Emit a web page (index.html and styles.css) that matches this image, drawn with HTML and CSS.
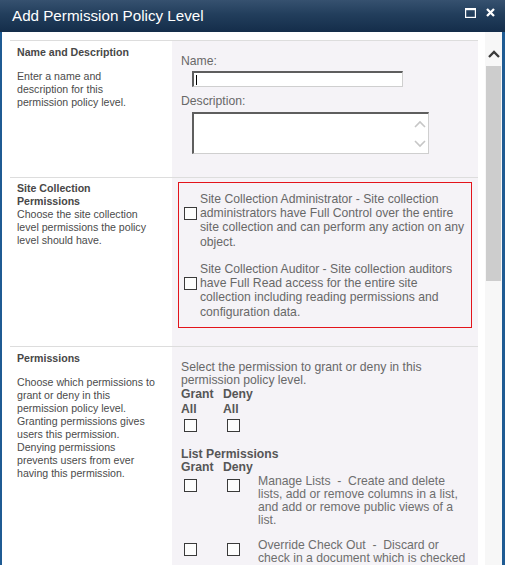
FILE: index.html
```html
<!DOCTYPE html>
<html lang="en">
<head>
<meta charset="utf-8">
<title>Add Permission Policy Level</title>
<link rel="stylesheet" href="styles.css">
</head>
<body>
<div class="dialog">
  <div class="titlebar">
    <span class="title">Add Permission Policy Level</span>
    <div class="tb-icons">
      <svg class="ic-max" width="11" height="10" viewBox="0 0 11 10"><rect x="0" y="0" width="11" height="2.2" fill="#fff"/><rect x="0.6" y="0.6" width="9.8" height="8.8" fill="none" stroke="#fff" stroke-width="1.2"/></svg>
      <svg class="ic-close" width="9" height="9" viewBox="0 0 9 9"><path d="M1 1 L8 8 M8 1 L1 8" stroke="#fff" stroke-width="2.3" fill="none"/></svg>
    </div>
  </div>
  <div class="frame">
    <div class="content">
      <div class="form">
        <section class="sec">
          <div class="lcol">
            <div class="lhead">Name and Description</div>
            <div class="ldesc gap">Enter a name and<br>description for this<br>permission policy level.</div>
          </div>
          <div class="rcol r1">
            <div class="label">Name:</div>
            <div class="textbox"><span class="caret"></span></div>
            <div class="label desc-label">Description:</div>
            <div class="textarea">
              <div class="ta-arrows">
                <svg width="12" height="8" viewBox="0 0 12 8"><path d="M1 7 L6 2 L11 7" stroke="#c6c6c6" stroke-width="1.6" fill="none"/></svg>
                <svg width="12" height="8" viewBox="0 0 12 8"><path d="M1 1 L6 6 L11 1" stroke="#c6c6c6" stroke-width="1.6" fill="none"/></svg>
              </div>
            </div>
          </div>
        </section>
        <section class="sec">
          <div class="lcol">
            <div class="lhead">Site Collection<br>Permissions</div>
            <div class="ldesc">Choose the site collection<br>level permissions the policy<br>level should have.</div>
          </div>
          <div class="rcol r2">
            <div class="redbox">
              <div class="sc-item">
                <input type="checkbox" class="cb sc-cb">
                <div class="sc-text">Site Collection Administrator - Site collection<br>administrators have Full Control over the entire<br>site collection and can perform any action on any<br>object.</div>
              </div>
              <div class="sc-item second">
                <input type="checkbox" class="cb sc-cb">
                <div class="sc-text">Site Collection Auditor - Site collection auditors<br>have Full Read access for the entire site<br>collection including reading permissions and<br>configuration data.</div>
              </div>
            </div>
          </div>
        </section>
        <section class="sec">
          <div class="lcol">
            <div class="lhead">Permissions</div>
            <div class="ldesc gap">Choose which permissions to<br>grant or deny in this<br>permission policy level.<br>Granting permissions gives<br>users this permission.<br>Denying permissions<br>prevents users from ever<br>having this permission.</div>
          </div>
          <div class="rcol r3">
            <div class="intro">Select the permission to grant or deny in this<br>permission policy level.</div>
            <div class="all-row">
              <div class="col-g"><div class="bold all-lbl">Grant<br>All</div><input type="checkbox" class="cb all-cb"></div>
              <div class="col-d"><div class="bold all-lbl">Deny<br>All</div><input type="checkbox" class="cb all-cb"></div>
            </div>
            <div class="bold lp-head">List Permissions</div>
            <div class="gd-head"><span class="col-g bold">Grant</span><span class="col-d bold">Deny</span></div>
            <div class="perm">
              <div class="col-g"><input type="checkbox" class="cb p-cb"></div>
              <div class="col-d"><input type="checkbox" class="cb p-cb"></div>
              <div class="p-text">Manage Lists&nbsp; -&nbsp; Create and delete<br>lists, add or remove columns in a list,<br>and add or remove public views of a<br>list.</div>
            </div>
            <div class="perm second">
              <div class="col-g"><input type="checkbox" class="cb p-cb"></div>
              <div class="col-d"><input type="checkbox" class="cb p-cb"></div>
              <div class="p-text">Override Check Out&nbsp; -&nbsp; Discard or<br>check in a document which is checked</div>
            </div>
          </div>
        </section>
      </div>
    </div>
    <div class="scrollbar">
      <svg class="sb-up" width="12" height="8" viewBox="0 0 12 8"><path d="M1 7 L6 2 L11 7" stroke="#3a3a3a" stroke-width="2.3" fill="none"/></svg>
      <div class="thumb"></div>
    </div>
  </div>
</div>
</body>
</html>
```
FILE: styles.css
```css
html, body {
  margin: 0;
  padding: 0;
  overflow: hidden;
  background: #fff;
}

.dialog {
  width: 505px;
  height: 565px;
  overflow: hidden;
  font-family: "Liberation Sans", Arial, sans-serif;
}

.titlebar {
  height: 32px;
  display: flex;
  align-items: flex-start;
  padding-left: 12px;
  padding-right: 10px;
  background: linear-gradient(to bottom, #36516f 0%, #223e5c 45%, #142d4a 100%);
  box-sizing: border-box;
}

.title {
  color: #fff;
  font-size: 15.2px;
  line-height: 32px;
  white-space: nowrap;
}

.tb-icons {
  margin-left: auto;
  display: flex;
  align-items: flex-start;
  gap: 10px;
  padding-top: 8px;
}

.frame {
  height: 533px;
  display: flex;
  border-left: 2px solid #1f5b93;
  border-right: 3px solid #1f5b93;
  box-sizing: border-box;
}

.content {
  flex: 1;
  padding: 8px 7px 0 8px;
  overflow: hidden;
  background: #fff;
}

.form {
  width: 468px;
}

.sec {
  display: grid;
  grid-template-columns: 162px 306px;
  border-top: 1px solid #dddddd;
}

.lcol {
  padding: 4.5px 6px 10px 7px;
  font-size: 10.6px;
  line-height: 12.9px;
  color: #4b4b4b;
  white-space: nowrap;
}

.lhead {
  font-weight: bold;
  color: #474747;
  line-height: 13px;
}

.ldesc.gap {
  margin-top: 11.5px;
}

.rcol {
  background: #f5f3f7;
  font-size: 12.2px;
  color: #686868;
  white-space: nowrap;
}

.r1 {
  padding: 13.5px 9px 23px 9px;
}

.label {
  line-height: 13.3px;
}

.desc-label {
  margin-top: 8.5px;
}

.textbox {
  margin: 3px 0 0 11px;
  width: 211px;
  height: 16px;
  box-sizing: border-box;
  background: #fff;
  border-top: 2px solid #5e5e5e;
  border-left: 2px solid #5e5e5e;
  border-right: 1px solid #cfcfcf;
  border-bottom: 1px solid #cfcfcf;
  display: flex;
  align-items: flex-start;
}

.caret {
  display: block;
  width: 1px;
  height: 10px;
  margin: 2px 0 0 2px;
  background: #000;
}

.textarea {
  margin: 3px 0 0 11px;
  width: 237px;
  height: 42px;
  box-sizing: border-box;
  background: #fff;
  border-top: 2px solid #5e5e5e;
  border-left: 2px solid #5e5e5e;
  border-right: 1px solid #cfcfcf;
  border-bottom: 1px solid #cfcfcf;
  display: flex;
  justify-content: flex-end;
}

.ta-arrows {
  display: flex;
  flex-direction: column;
  gap: 12px;
  padding: 6px 2px 0 0;
}

.ta-arrows svg {
  display: block;
}

.r2 {
  padding: 4px 6px 18px 6px;
}

.redbox {
  border: 1px solid #e3141b;
  padding: 9px 0 8px 5px;
}

.sc-item {
  display: flex;
  align-items: flex-start;
}

.sc-item.second {
  margin-top: 12.4px;
}

.cb {
  appearance: none;
  -webkit-appearance: none;
  display: block;
  width: 13px;
  height: 13px;
  margin: 0;
  box-sizing: border-box;
  border: 1px solid #3a3a3a;
  background: #fdfdfd;
  flex: none;
}

.sc-cb {
  margin-top: 15.5px;
  margin-right: 3px;
}

.sc-text {
  line-height: 14.4px;
}

.r3 {
  padding: 13.5px 9px 20px 9px;
}

.intro {
  line-height: 13.3px;
}

.bold {
  font-weight: bold;
  color: #565656;
}

.all-row {
  display: flex;
}

.col-g {
  width: 42px;
  flex: none;
}

.col-d {
  width: 35px;
  flex: none;
}

.all-lbl {
  line-height: 15px;
}

.all-cb {
  margin-top: 1.5px;
  margin-left: 3px;
}

.col-d .all-cb {
  margin-left: 4px;
}

.lp-head {
  margin-top: 16.3px;
  line-height: 13.3px;
}

.gd-head {
  display: flex;
  line-height: 13.3px;
}

.perm {
  display: flex;
  align-items: flex-start;
}

.perm.second {
  margin-top: 12px;
}

.p-cb {
  margin-top: 4.5px;
  margin-left: 3px;
}

.col-d .p-cb {
  margin-left: 4px;
}

.p-text {
  line-height: 13px;
  color: #6e6e6e;
}

.scrollbar {
  width: 17px;
  flex: none;
  background: #f7f7f7;
  display: flex;
  flex-direction: column;
  align-items: center;
}

.sb-up {
  display: block;
  margin-top: 18px;
  margin-left: 1px;
}

.thumb {
  margin-top: 8px;
  width: 15px;
  height: 215px;
  background: #cdcdcd;
}
```
